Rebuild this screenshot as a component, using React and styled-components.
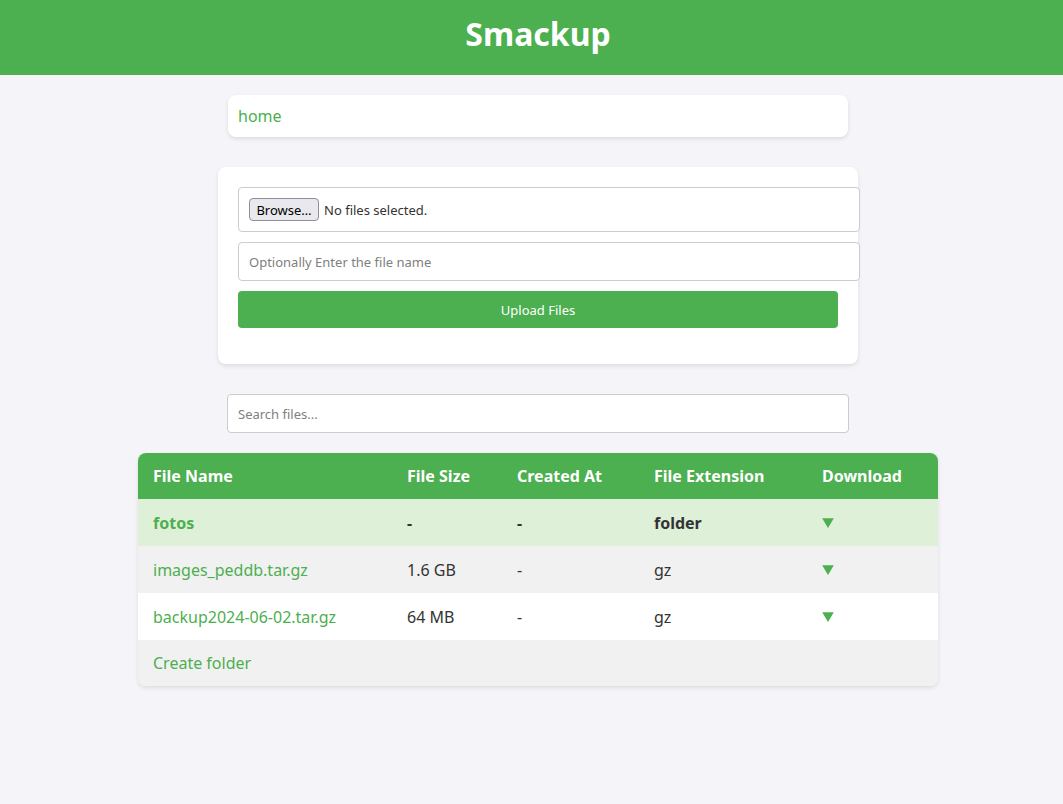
import React, { useRef, useState } from "react";
import styled, { createGlobalStyle } from "styled-components";

const green = "#4caf50";

const GlobalStyle = createGlobalStyle`
  body {
    margin: 0;
    background: #f4f4f9;
    color: #333;
    font-family: "Noto Sans", sans-serif;
    font-size: 16px;
    line-height: 22px;
  }
`;

const Header = styled.header`
  padding: 11px 0 19px 13px;
  background: ${green};
  color: #fff;
  text-align: center;
`;

const Title = styled.h1`
  margin: 0;
  font-size: 32px;
  line-height: 45px;
`;

const Main = styled.main`
  display: flex;
  flex-direction: column;
  align-items: center;
  padding: 20px 0 20px 13px;
`;

const Card = styled.div`
  box-sizing: border-box;
  width: 100%;
  background: #fff;
  border-radius: 8px;
  box-shadow: 0 2px 4px rgba(0, 0, 0, 0.1);
`;

const Breadcrumbs = styled(Card).attrs({ as: "nav" })`
  max-width: 620px;
  margin-bottom: 30px;
  padding: 10px;
`;

const UploadForm = styled(Card).attrs({ as: "form" })`
  display: flex;
  flex-direction: column;
  gap: 10px;
  max-width: 640px;
  margin-bottom: 30px;
  padding: 20px 20px 36px;
`;

const Link = styled.a`
  color: ${green};
  text-decoration: none;
  &:hover {
    text-decoration: underline;
  }
`;

const TextInput = styled.input`
  box-sizing: border-box;
  width: ${(p) => (p.$wide ? "calc(100% + 22px)" : "100%")};
  max-width: 622px;
  height: 39px;
  padding: 0 10px;
  border: 1px solid #ccc;
  border-radius: 4px;
  background: #fff;
  color: #333;
  font-family: "Noto Sans", sans-serif;
  font-size: 13px;
  &::placeholder {
    color: #808080;
  }
`;

const SearchInput = styled(TextInput)`
  margin-bottom: 20px;
`;

const FilePicker = styled.div`
  display: flex;
  align-items: center;
  gap: 5px;
  box-sizing: border-box;
  width: calc(100% + 22px);
  height: 45px;
  padding: 0 10px;
  border: 1px solid #ccc;
  border-radius: 4px;
  background: #fff;
  font-size: 13px;
`;

const BrowseButton = styled.button`
  width: 70px;
  height: 23px;
  padding: 0;
  border: 1px solid #8f8f9d;
  border-radius: 4px;
  background: #e9e9ed;
  color: #000;
  font-family: "Noto Sans", sans-serif;
  font-size: 13px;
  line-height: 20px;
`;

const SubmitButton = styled.button`
  height: 37px;
  border: 0;
  border-radius: 4px;
  background: ${green};
  color: #fff;
  font-family: "Noto Sans", sans-serif;
  font-size: 13px;
  cursor: pointer;
`;

const FileTable = styled.table`
  width: 100%;
  max-width: 800px;
  table-layout: fixed;
  border-collapse: collapse;
  border-radius: 8px;
  overflow: hidden;
  background: #fff;
  box-shadow: 0 2px 4px rgba(0, 0, 0, 0.1);
`;

const Column = styled.col`
  width: ${(p) => p.$share}%;
`;

const HeadCell = styled.th`
  height: 46px;
  padding: 0 15px;
  background: ${green};
  color: #fff;
  text-align: left;
`;

const Row = styled.tr`
  height: 47px;
  background: ${(p) => (p.$folder ? "#dff0d8" : "#fff")};
  font-weight: ${(p) => (p.$folder ? 700 : 400)};
  ${(p) => !p.$folder && "&:nth-child(even) { background: #f1f1f1; }"}
  &:last-child {
    height: 46px;
  }
`;

const Cell = styled.td`
  padding: 0 15px;
`;

const DownloadLink = styled(Link)`
  display: flex;
  width: 12px;
`;

const columns = [
  ["File Name", 31.75],
  ["File Size", 13.75],
  ["Created At", 17.125],
  ["File Extension", 21],
  ["Download", 16.375],
];

const files = [
  { name: "fotos", size: "-", created: "-", ext: "folder" },
  { name: "images_peddb.tar.gz", size: "1.6 GB", created: "-", ext: "gz" },
  { name: "backup2024-06-02.tar.gz", size: "64 MB", created: "-", ext: "gz" },
];

export default function App() {
  const picker = useRef(null);
  const [count, setCount] = useState(0);
  const [query, setQuery] = useState("");
  const shown = files.filter((f) => f.name.includes(query));

  return (
    <>
      <GlobalStyle />
      <Header>
        <Title>Smackup</Title>
      </Header>
      <Main>
        <Breadcrumbs>
          <Link href="#home">home</Link>
        </Breadcrumbs>
        <UploadForm onSubmit={(e) => e.preventDefault()}>
          <FilePicker>
            <BrowseButton type="button" onClick={() => picker.current.click()}>
              Browse…
            </BrowseButton>
            <label htmlFor="files">
              {count ? `${count} files selected.` : "No files selected."}
            </label>
            <input
              id="files"
              ref={picker}
              type="file"
              multiple
              hidden
              onChange={(e) => setCount(e.target.files.length)}
            />
          </FilePicker>
          <TextInput
            $wide
            type="text"
            aria-label="File name"
            placeholder="Optionally Enter the file name"
          />
          <SubmitButton type="submit">Upload Files</SubmitButton>
        </UploadForm>
        <SearchInput
          type="text"
          aria-label="Search files"
          placeholder="Search files..."
          value={query}
          onChange={(e) => setQuery(e.target.value)}
        />
        <FileTable>
          <colgroup>
            {columns.map(([label, share]) => (
              <Column key={label} $share={share} />
            ))}
          </colgroup>
          <thead>
            <tr>
              {columns.map(([label]) => (
                <HeadCell key={label} scope="col">
                  {label}
                </HeadCell>
              ))}
            </tr>
          </thead>
          <tbody>
            {shown.map((f) => (
              <Row key={f.name} $folder={f.ext === "folder"}>
                <Cell>
                  <Link href={`#${f.name}`}>{f.name}</Link>
                </Cell>
                <Cell>{f.size}</Cell>
                <Cell>{f.created}</Cell>
                <Cell>{f.ext}</Cell>
                <Cell>
                  <DownloadLink href={`#download-${f.name}`} aria-label={`Download ${f.name}`}>
                    <svg width="12" height="10" viewBox="0 0 12 10" aria-hidden="true">
                      <path d="M0.2 0.3h11.6L6 9.9z" fill="currentColor" />
                    </svg>
                  </DownloadLink>
                </Cell>
              </Row>
            ))}
            <Row>
              <Cell colSpan={5}>
                <Link href="#create-folder">Create folder</Link>
              </Cell>
            </Row>
          </tbody>
        </FileTable>
      </Main>
    </>
  );
}
